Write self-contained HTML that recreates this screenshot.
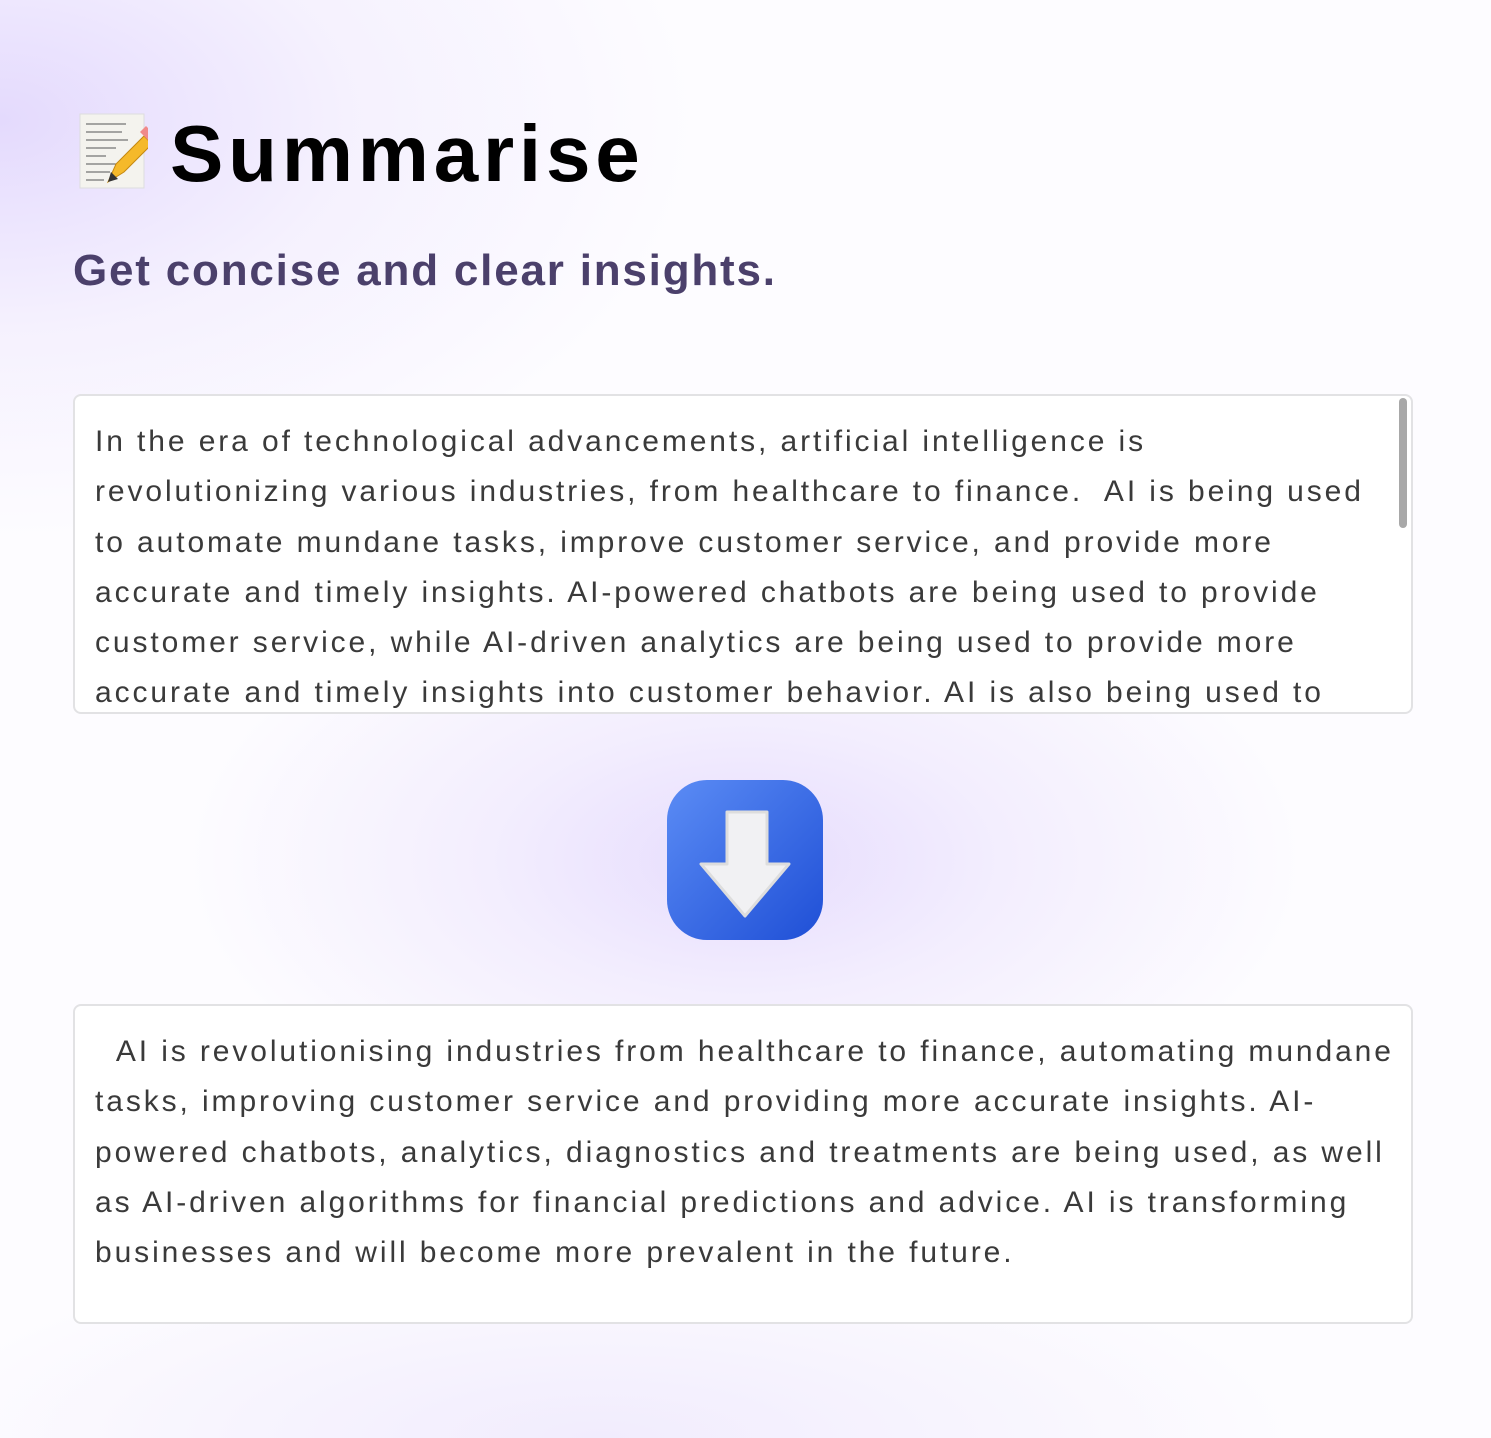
<!DOCTYPE html>
<html><head><meta charset="utf-8"><style>
html,body{margin:0;padding:0}
body{width:1491px;height:1438px;overflow:hidden;position:relative;font-family:"Liberation Sans",sans-serif;
background:
radial-gradient(ellipse 560px 300px at 745px 860px,#e6dcfd 0%,rgba(236,228,253,.6) 45%,rgba(255,255,255,0) 100%),
radial-gradient(ellipse 700px 420px at 0px 120px,#e4dafd 0%,rgba(240,234,254,.6) 50%,rgba(255,255,255,0) 100%),
radial-gradient(ellipse 700px 200px at 600px 1438px,#f1ecfd 0%,rgba(255,255,255,0) 100%),
#fdfcff;}
h1{position:absolute;left:170px;top:108px;margin:0;font-size:80px;font-weight:700;color:#000;letter-spacing:4.8px}
.icon{position:absolute;left:78px;top:112px;width:70px;height:78px}
h2{position:absolute;left:73px;top:246px;margin:0;font-size:44px;font-weight:700;color:#4b406b;letter-spacing:1.8px}
.box{position:absolute;left:73px;width:1336px;height:316px;border:2.5px solid #e2e2e4;border-radius:8px;background:#fff;overflow:hidden}
.box div{position:absolute;left:20px;top:21px;font-size:30px;line-height:50.3px;color:#3a3a3a;white-space:pre;letter-spacing:2.9px}
.sb{position:absolute;right:4px;top:2px;width:8px;height:130px;background:#a8a8a8;border-radius:4px}
</style></head><body>
<svg class="icon" viewBox="0 0 70 78"><rect x="2" y="2" width="64" height="74" fill="#f4f3ee" stroke="#ddd"/>
<g stroke="#555" stroke-width="1"><path d="M8 12h40M8 20h36M8 28h42M8 36h30M8 44h20M8 52h34M8 60h24M8 68h18"/></g>
<path d="M30 70l8-18 28-28 8 8-28 28z" fill="#f5b92a" stroke="#c58810"/><path d="M62 20l6-6 8 8-6 6z" fill="#f08a8a"/><path d="M30 70l3-10 7 7z" fill="#333"/></svg>
<h1>Summarise</h1>
<h2>Get concise and clear insights.</h2>
<div class="box" style="top:394px"><div>In the era of technological advancements, artificial intelligence is
revolutionizing various industries, from healthcare to finance.  AI is being used
to automate mundane tasks, improve customer service, and provide more
accurate and timely insights. AI-powered chatbots are being used to provide
customer service, while AI-driven analytics are being used to provide more
accurate and timely insights into customer behavior. AI is also being used to</div><span class="sb"></span></div>
<svg style="position:absolute;left:665px;top:778px" width="160" height="164" viewBox="0 0 160 164">
<defs><linearGradient id="g" x1="0" y1="0" x2="1" y2="1"><stop offset="0" stop-color="#5b8cf5"/><stop offset="1" stop-color="#1f4fd6"/></linearGradient></defs>
<rect x="2" y="2" width="156" height="160" rx="40" fill="url(#g)"/>
<path d="M62 34h40v52h22l-44 52-44-52h26z" fill="#f1f1f3" stroke="#ddd" stroke-linejoin="round" stroke-width="3"/></svg>
<div class="box" style="top:1004px"><div>  AI is revolutionising industries from healthcare to finance, automating mundane
tasks, improving customer service and providing more accurate insights. AI-
powered chatbots, analytics, diagnostics and treatments are being used, as well
as AI-driven algorithms for financial predictions and advice. AI is transforming
businesses and will become more prevalent in the future.</div></div>
</body></html>
